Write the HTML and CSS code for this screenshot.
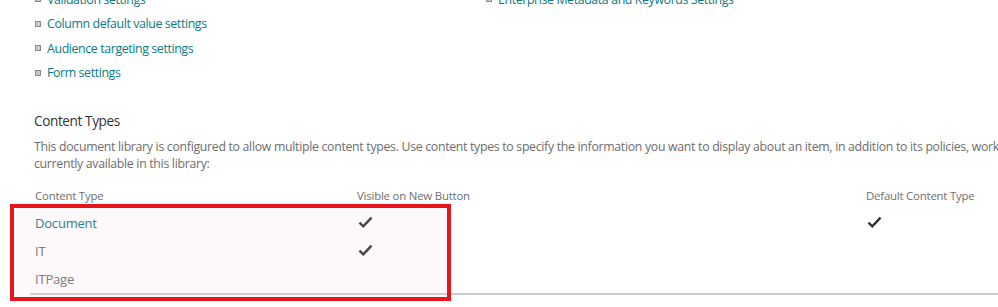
FILE: index.html
```html
<!DOCTYPE html>
<html>
<head>
<meta charset="utf-8">
<link rel="stylesheet" href="styles.css">
</head>
<body>
<div class="page">
  <div class="links">
    <ul class="link-col">
      <li><a>Validation settings</a></li>
      <li><a>Column default value settings</a></li>
      <li><a>Audience targeting settings</a></li>
      <li><a>Form settings</a></li>
    </ul>
    <ul class="link-col">
      <li><a>Enterprise Metadata and Keywords Settings</a></li>
    </ul>
  </div>

  <section class="ctypes">
    <h2 class="title">Content Types</h2>
    <p class="desc">This document library is configured to allow multiple content types. Use content types to specify the information you want to display about an item, in addition to its policies, workflows, or other behavior. The following content types are<br>currently available in this library:</p>

    <div class="table">
      <div class="th">Content Type</div>
      <div class="th">Visible on New Button</div>
      <div class="th">Default Content Type</div>

      <div class="td"><a class="ct-link">Document</a></div>
      <div class="td"><svg class="check" viewBox="0 0 16 14"><path d="M1.5 7.2 L5.6 11.2 L14.5 1.8" /></svg></div>
      <div class="td"><svg class="check" viewBox="0 0 16 14"><path d="M1.5 7.2 L5.6 11.2 L14.5 1.8" /></svg></div>

      <div class="td plain">IT</div>
      <div class="td"><svg class="check" viewBox="0 0 16 14"><path d="M1.5 7.2 L5.6 11.2 L14.5 1.8" /></svg></div>
      <div class="td"></div>

      <div class="td plain">ITPage</div>
      <div class="td"></div>
      <div class="td"></div>
    </div>
    <div class="rule"></div>
  </section>
  <div class="highlight"></div>
</div>
</body>
</html>
```

FILE: styles.css
```css
html, body {
  margin: 0;
  padding: 0;
  background: #ffffff;
  overflow: hidden;
}
body {
  width: 998px;
  height: 307px;
  font-family: "Open Sans", "Noto Sans", sans-serif;
}
.page {
  position: relative;
  width: 998px;
  height: 307px;
  overflow: hidden;
}
.links {
  display: grid;
  grid-template-columns: 451px 460px;
  margin-top: -13px;
  padding-left: 35px;
}
.link-col {
  list-style: none;
  margin: 0;
  padding: 0;
}
.link-col li {
  display: flex;
  align-items: center;
  height: 24.5px;
  font-size: 12.4px;
  letter-spacing: -0.4px;
  color: #0c7c86;
}
.link-col li::before {
  content: "";
  width: 4px;
  height: 4px;
  border: 1px solid #8a8a8a;
  background: #c8c8c8;
  margin-right: 6px;
  flex: none;
}
.link-col a {
  color: #0b7a84;
}
.ctypes {
  margin-top: 26px;
  padding-left: 34px;
}
.title {
  margin: 0;
  font-size: 13.6px;
  font-weight: 400;
  letter-spacing: -0.4px;
  color: #333333;
  line-height: 20px;
}
.desc {
  margin: 7px 0 0 0;
  width: 1500px;
  font-size: 12.3px;
  letter-spacing: -0.3px;
  line-height: 17px;
  color: #6d6d6d;
}
.table {
  display: grid;
  grid-template-columns: 322px 509px 200px;
  grid-template-rows: 21px 28px 28px 28px;
  margin-top: 15.5px;
  margin-left: 1px;
}
.th {
  font-size: 11.4px;
  letter-spacing: -0.2px;
  color: #6e6e6e;
  line-height: 16px;
}
.td {
  display: flex;
  align-items: center;
  font-size: 13px;
  letter-spacing: -0.2px;
  color: #707070;
}
.ct-link {
  color: #0b7a84;
}
.check {
  width: 15px;
  height: 13px;
  margin-left: 1px;
  margin-top: 0;
}
.check path {
  fill: none;
  stroke: #333333;
  stroke-width: 2.6;
  stroke-linecap: butt;
  stroke-linejoin: miter;
}
.rule {
  height: 2px;
  background: #cccccc;
  margin-left: -4px;
}
.highlight {
  position: absolute;
  left: 10px;
  top: 204px;
  width: 433px;
  height: 89px;
  border: 4px solid #e8141b;
  background: rgba(240, 200, 210, 0.12);
  pointer-events: none;
}
```
